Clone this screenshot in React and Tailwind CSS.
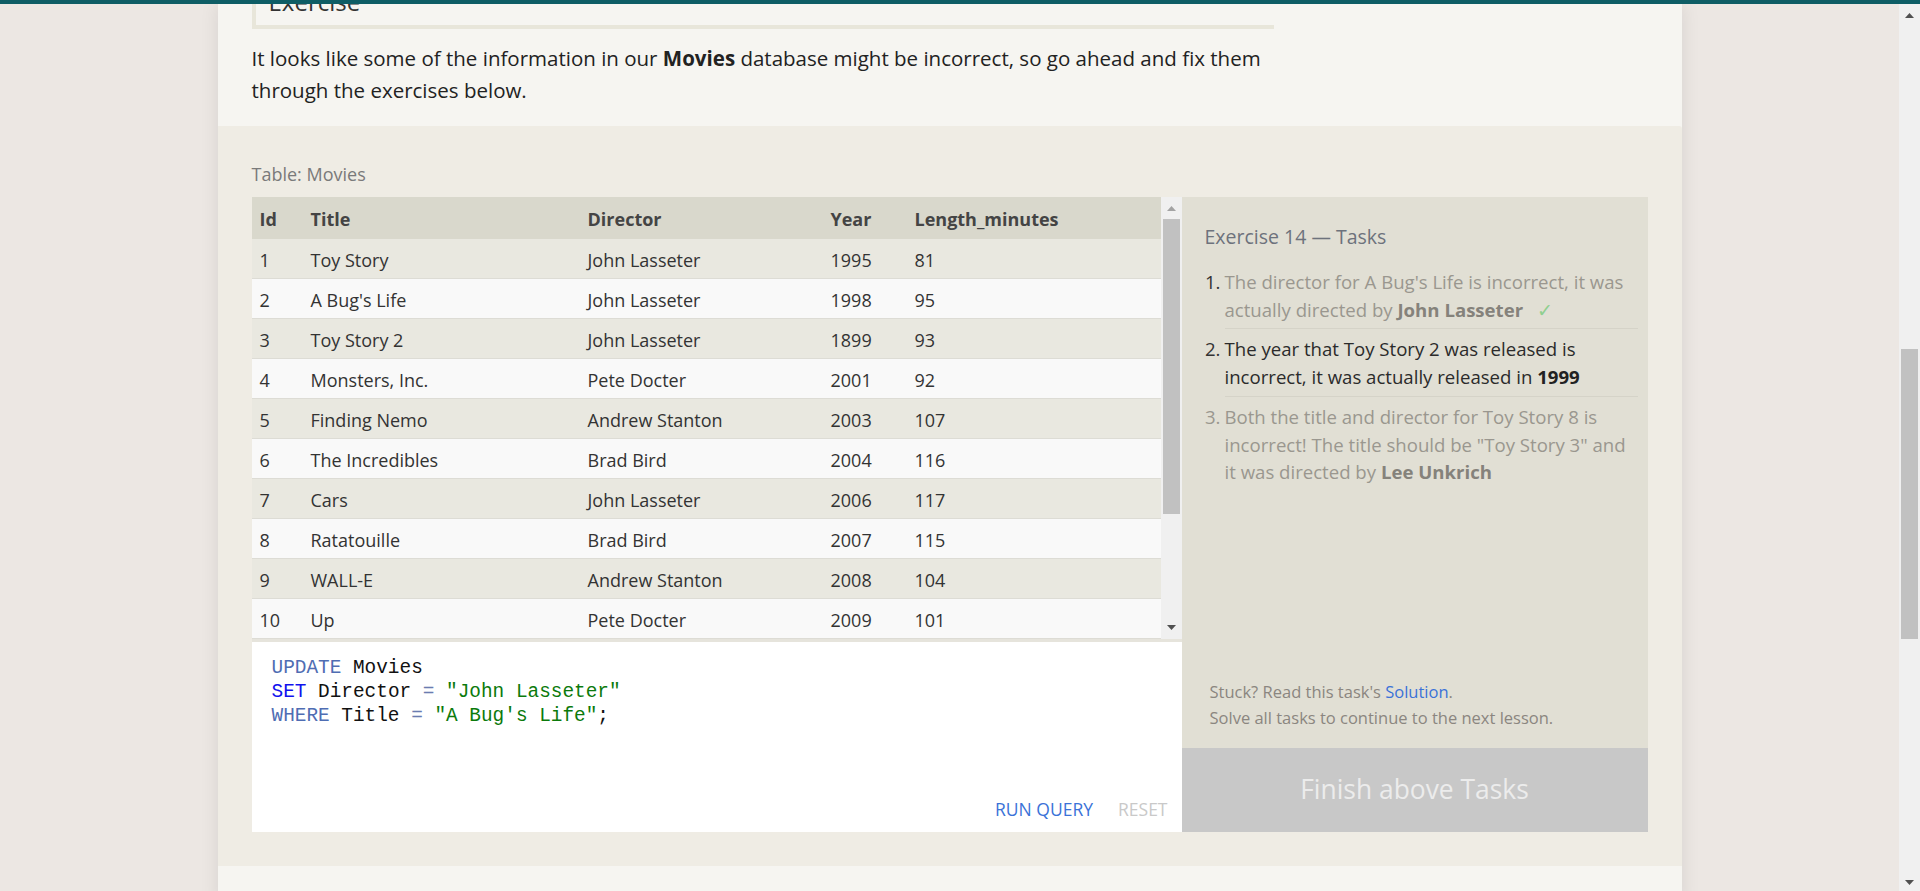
const movies = [
  [1, 'Toy Story', 'John Lasseter', 1995, 81],
  [2, "A Bug's Life", 'John Lasseter', 1998, 95],
  [3, 'Toy Story 2', 'John Lasseter', 1899, 93],
  [4, 'Monsters, Inc.', 'Pete Docter', 2001, 92],
  [5, 'Finding Nemo', 'Andrew Stanton', 2003, 107],
  [6, 'The Incredibles', 'Brad Bird', 2004, 116],
  [7, 'Cars', 'John Lasseter', 2006, 117],
  [8, 'Ratatouille', 'Brad Bird', 2007, 115],
  [9, 'WALL-E', 'Andrew Stanton', 2008, 104],
  [10, 'Up', 'Pete Docter', 2009, 101],
];

const Arrow = ({ down, color }) => (
  <svg width="9" height="5" viewBox="0 0 9 5">
    <path d={down ? 'M0 0h9L4.5 5z' : 'M0 5h9L4.5 0z'} fill={color} />
  </svg>
);

const Row = ({ cells, head, odd }) => (
  <div
    className={
      head
        ? 'flex h-[42px] items-center bg-[#d9d8cc] pt-[3px] font-bold text-[#444]'
        : `flex h-[40px] items-center border-b border-[#dddcd5] pt-[3px] text-[#333] ${odd ? 'bg-[#e9e8e0]' : 'bg-[#f9f9f9]'}`
    }
  >
    <div className="w-[51px] pl-2">{cells[0]}</div>
    <div className="w-[277px] pl-2">{cells[1]}</div>
    <div className="w-[243px] pl-2">{cells[2]}</div>
    <div className="w-[84px] pl-2">{cells[3]}</div>
    <div className="flex-1 pl-2">{cells[4]}</div>
  </div>
);

const Task = ({ n, numClass, className, children, last }) => (
  <li className="flex">
    <span className={`w-[23px] shrink-0 pt-[6px] pr-[4px] text-right ${numClass}`}>{n}.</span>
    <div
      className={`flex-1 whitespace-nowrap pt-[6px] pb-[5px] ${last ? '' : 'border-b border-[#d5d3c8]'} ${className}`}
    >
      {children}
    </div>
  </li>
);

export default function App() {
  return (
    <div className="flex h-[891px] flex-col overflow-hidden bg-[#ece7e3] font-['Open_Sans',sans-serif]">
      <div className="h-[4px] shrink-0 bg-[#0e5d65]" />
      <div className="flex h-[887px]">
        <main className="flex-1 overflow-hidden">
          <div className="mx-auto w-[1464px] bg-[#f6f5f1] pb-[40px] shadow-[0_0_18px_rgba(0,0,0,0.09)]">
            {/* intro */}
            <div className="px-[34px] pb-[20px]">
              <div className="h-[25px] w-[1022px] overflow-hidden border-b-4 border-l-4 border-[#e8e6da] pl-[13px]">
                <div className="-mt-[18px] text-[24px] leading-[32px] text-[#333]">Exercise</div>
              </div>
              <p className="mt-[13px] w-[1022px] text-[20.5px] leading-[32px] text-[#222]">
                It looks like some of the information in our <b>Movies</b> database might be incorrect, so go
                ahead and fix them through the exercises below.
              </p>
            </div>

            {/* exercise */}
            <div className="rounded-tr-[3px] bg-[#efece4] px-[34px] pt-[36px] pb-[34px]">
              <div className="text-[18px] leading-[24px] text-[#7a7a7a]">Table: Movies</div>
              <div className="mt-[11px] flex h-[635px] w-[1396px]">
                <div className="flex w-[930px] flex-col">
                  <div className="flex h-[442px] text-[18px]">
                    <div className="w-[909px]">
                      <Row head cells={['Id', 'Title', 'Director', 'Year', 'Length_minutes']} />
                      {movies.map((m, i) => (
                        <Row key={m[0]} cells={m} odd={i % 2 === 0} />
                      ))}
                    </div>
                    <div className="flex w-[21px] flex-col items-center bg-[#f0f0f0]">
                      <div className="flex h-[22px] items-center">
                        <Arrow color="#a3a3a3" />
                      </div>
                      <div className="h-[295px] w-[17px] bg-[#c1c1c1]" />
                      <div className="flex-1" />
                      <div className="flex h-[24px] items-center">
                        <Arrow down color="#505050" />
                      </div>
                    </div>
                  </div>
                  <div className="flex flex-1 flex-col border-t-[3px] border-[#e6e4dc] bg-white">
                    <pre className="px-[20px] pt-[14px] font-['Liberation_Mono',monospace] text-[19.4px] leading-[24px] text-[#111]">
                      <span className="text-[#4f6db3]">UPDATE</span> Movies{'\n'}
                      <span className="text-[#1111ee]">SET</span> Director <span className="text-[#6b7cb0]">=</span>{' '}
                      <span className="text-[#0b7a0b]">"John Lasseter"</span>
                      {'\n'}
                      <span className="text-[#4f6db3]">WHERE</span> Title <span className="text-[#6b7cb0]">=</span>{' '}
                      <span className="text-[#0b7a0b]">"A Bug's Life"</span>;
                    </pre>
                    <div className="mt-auto flex justify-end gap-[25px] pr-[14px] pb-[11px] text-[17.5px] leading-[24px]">
                      <span className="text-[#3a72d8]">RUN QUERY</span>
                      <span className="text-[#c9c9c9]">RESET</span>
                    </div>
                  </div>
                </div>

                <div className="flex w-[466px] flex-col bg-[#e1dfd4]">
                  <div className="flex-1 pt-[24px] pr-[10px] pl-[23px]">
                    <h3 className="text-[19.5px] leading-[32px] text-[#6d727c]">Exercise 14 — Tasks</h3>
                    <ol className="mt-[9px] -ml-[3px] text-[18.6px] leading-[27.7px]">
                      <Task n={1} numClass="text-[#333]" className="text-[#9a978f]">
                        The director for A Bug's Life is incorrect, it was
                        <br />
                        actually directed by <b className="text-[#85827b]">John Lasseter</b>
                        <span className="ml-[14px] text-[#8fcf8f]">✓</span>
                      </Task>
                      <Task n={2} numClass="text-[#333]" className="text-[#2b2b2b]">
                        The year that Toy Story 2 was released is
                        <br />
                        incorrect, it was actually released in <b className="text-[#222]">1999</b>
                      </Task>
                      <Task n={3} last numClass="text-[#9a978f]" className="text-[#9a978f]">
                        Both the title and director for Toy Story 8 is
                        <br />
                        incorrect! The title should be "Toy Story 3" and
                        <br />
                        it was directed by <b className="text-[#85827b]">Lee Unkrich</b>
                      </Task>
                    </ol>
                  </div>
                  <div className="pb-[18px] pl-[28px] text-[16.5px] leading-[25.5px] text-[#8b8680]">
                    <div>
                      Stuck? Read this task's <span className="text-[#3a72d8]">Solution</span>.
                    </div>
                    <div>Solve all tasks to continue to the next lesson.</div>
                  </div>
                  <div className="flex h-[84px] items-center justify-center bg-[#c8c8c8] text-[26.4px] text-[#ececec]">
                    Finish above Tasks
                  </div>
                </div>
              </div>
            </div>
          </div>
        </main>

        <div className="flex w-[21px] flex-col items-center bg-[#f0f0f0]">
          <div className="flex h-[22px] items-center">
            <Arrow color="#505050" />
          </div>
          <div className="mt-[323px] h-[290px] w-[17px] bg-[#c1c1c1]" />
          <div className="flex-1" />
          <div className="flex h-[18px] items-center">
            <Arrow down color="#505050" />
          </div>
        </div>
      </div>
    </div>
  );
}
